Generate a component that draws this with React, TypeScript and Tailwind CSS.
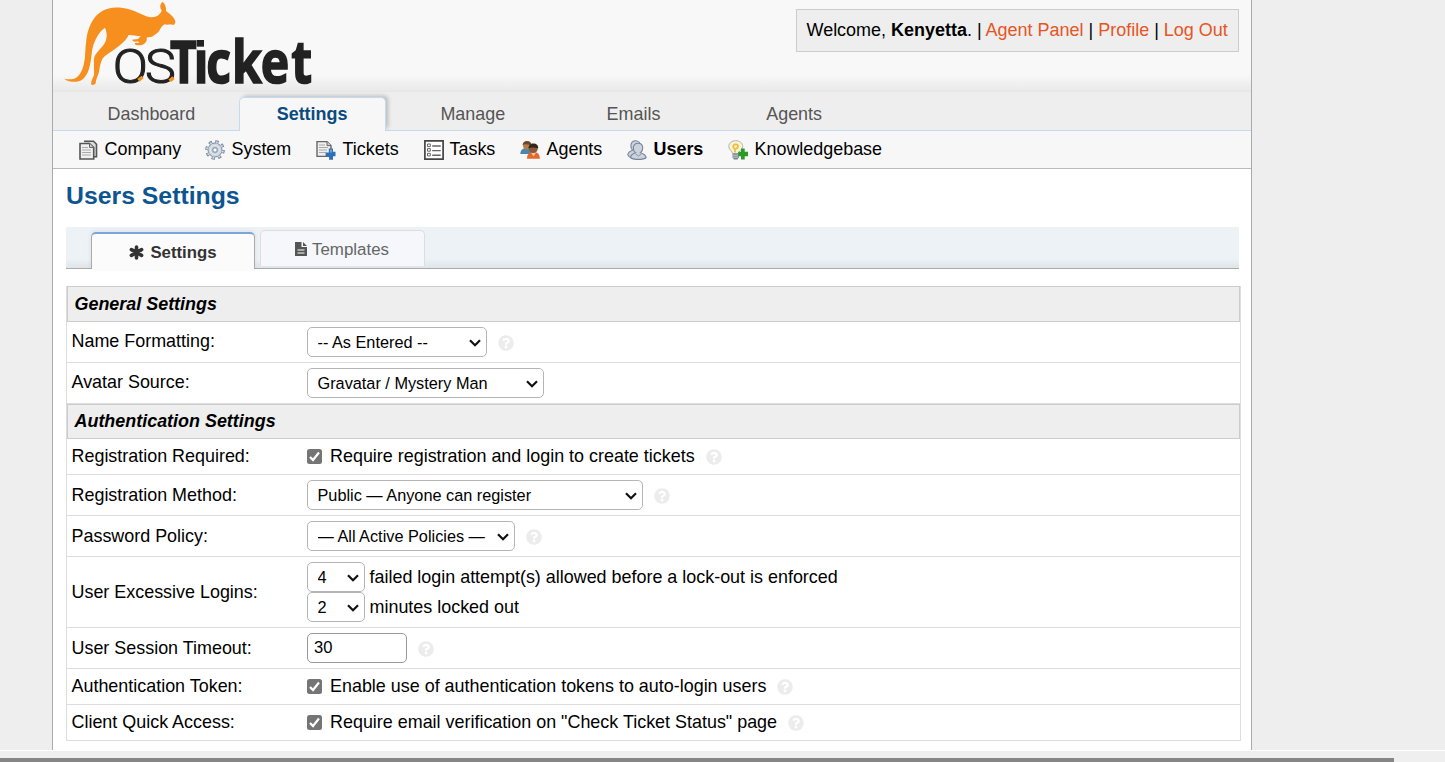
import React from "react";
import { FaQuestionCircle } from "react-icons/fa";

function Logo() {
  return (
    <svg className="block h-[91px] w-[270px] overflow-visible" viewBox="9 0 810 273" aria-label="osTicket">
      <path
        fill="#f78f1e"
        d="M338 5C346 13 349 22 348 33C358 40 371 51 374 59C378 65 375 73 370 75C361 72 352 76 344 73C338 75 332 84 328 92C324 99 316 103 312 106C308 112 298 111 290 113C292 121 288 127 282 132C276 137 262 137 256 134L254 129L268 128L264 124C256 127 248 124 246 119L264 117L272 108C256 108 244 104 236 105C228 122 212 134 196 146C176 160 162 168 157 177C151 188 149 204 147 216C144 228 137 238 137 250C133 256 127 256 123 253C123 243 128 236 132 226C133 206 131 186 132 176C134 162 150 149 162 133C170 120 174 104 165 83C149 93 135 117 128 143C123 167 124 188 115 212C108 231 96 243 80 245C67 246 52 244 42 236C50 237 60 239 69 237C84 235 95 217 101 195C107 172 105 145 109 120C112 95 120 68 140 46C160 26 187 22 213 23C243 25 266 39 289 49C300 53 316 53 325 46C330 41 335 36 335 31C329 23 329 12 338 5Z"
      />
      <g fill="#222" stroke="#222">
        <text
          transform="translate(0 249) scale(1.08 1)"
          fontFamily="Roboto"
          fontWeight="300"
          fontSize="144"
          strokeWidth="3"
          x="174 264"
        >
          OS
        </text>
        <text
          transform="translate(0 249) scale(0.82 1)"
          fontFamily="'Open Sans'"
          fontWeight="700"
          fontSize="176"
          strokeWidth="5"
          x="439 526 572 666 771 883"
        >
          Ticket
        </text>
      </g>
      <path fill="#f8f8f8" d="M439 98H468V147H439Z" />
      <path fill="#222" d="M440 120H462V140H440Z" />
      <path fill="#f78f1e" d="M262 237L275 227L281 234L269 245ZM355 239L367 229L374 237L364 246Z" />
    </svg>
  );
}

const CompanyIcon = () => (
  <svg viewBox="0 0 20 20" className="h-5 w-5">
    <path d="M5 1.300h9.500l3 3v12.500h-3" fill="#ddd" stroke="#555" strokeWidth="1.600" />
    <path d="M1 3.500h9.500l4.200 4v11.500H1z" fill="#f1f1f1" stroke="#555" strokeWidth="1.600" />
    <path d="M10.500 3.500v4h4" fill="#ccc" stroke="#666" />
    <path d="M3 7.500h6M3 10h9M3 12.500h9M3 15h9" stroke="#aaa" strokeWidth="1.200" />
  </svg>
);

const SystemIcon = () => (
  <svg viewBox="0 0 20 20" className="h-5 w-5">
    <circle cx="10" cy="10" r="8.200" fill="none" stroke="#74849a" strokeWidth="3.200" strokeDasharray="3.300 3.140" />
    <circle cx="10" cy="10" r="7" fill="#cfd8e2" stroke="#7f8da0" strokeWidth="1" />
    <circle
      cx="10"
      cy="10"
      r="7.800"
      fill="none"
      stroke="#cfd8e2"
      strokeWidth="2.200"
      strokeDasharray="1.800 4.326"
      strokeDashoffset="-.670"
    />
    <circle cx="10" cy="10" r="4.200" fill="#b4bfcc" stroke="#edf1f5" />
    <circle cx="10" cy="10" r="2.200" fill="#fff" stroke="#8290a0" />
  </svg>
);

const TicketsIcon = () => (
  <svg viewBox="0 0 20 20" className="h-5 w-5">
    <path d="M1 1.600h10l4 4v10.800H1z" fill="#eee" stroke="#666" strokeWidth="1.400" />
    <path d="M11 1.600v4h4" fill="#ccc" stroke="#666" />
    <path d="M3 5h6M3 7.500h9M3 10h8M3 12.500h7" stroke="#aaa" strokeWidth="1.200" />
    <path d="M12.800 8.500H17v3.200h2.500v4.600H17v3.400h-3.900v-3.200H9.600v-4h3.200z" fill="#2d70b8" />
    <path d="M14 9.500h2v3h-2z" fill="#72a4d8" />
  </svg>
);

const TasksIcon = () => (
  <svg viewBox="0 0 20 20" className="h-5 w-5">
    <path d="M.900.900h18.200v18.200H.900z" fill="#fff" stroke="#444" strokeWidth="1.700" />
    <path d="M3.500 4h2.800v2.600H3.500zM3.500 8.600h2.800v2.600H3.500zM3.500 13.300h2.800v2.600H3.500z" fill="#fff" stroke="#666" />
    <path d="M8.200 6h8.500M8.200 10.600h8.500M8.200 15.300h8.500" stroke="#666" strokeWidth="1.400" />
  </svg>
);

const AgentsIcon = () => (
  <svg viewBox="0 0 20 20" className="h-5 w-5">
    <path d="M.300 14C.300 10 3 8 7 8s5 3 5 6z" fill="#4a86ad" />
    <circle cx="7" cy="5.500" r="4" fill="#b97d4c" />
    <path d="M2.600 5.500C2.500 2.500 4.500 1 7 1s4.500 1.500 4.300 3.700C8 5.500 5 3 2.600 5.500z" fill="#6b4828" />
    <path d="M7 18.800C7 14.500 9 12 13.500 12s6.300 2.500 6.300 6.800z" fill="#e4672c" />
    <path d="M11 12.500l2.500 4 2.700-4z" fill="#f3c19c" />
    <circle cx="13.300" cy="8.500" r="4.500" fill="#8a5a38" />
    <path d="M8.600 8.500C8.500 5.300 10.500 3.500 13.400 3.500s5 1.900 4.800 4.700C15 8 11.500 6.500 8.600 8.500z" fill="#33251b" />
  </svg>
);

const UsersIcon = () => (
  <svg viewBox="0 0 20 20" className="h-5 w-5">
    <g fill="#cbd2dc" stroke="#76859b" strokeWidth="1.100">
      <path d="M.800 14.800c.400-3 2-3.700 4.700-4.600C4 8.700 3.700 7 3.900 5.200 4.200 2.500 6 .800 8.600.800s4.800 2 4.800 4.900L12 17H2.500z" />
      <path d="M3.500 17.500c.500-3 2.200-3.800 5-4.700-1.700-1.300-2.200-3-2.200-4.800C6.300 5 8.200 3.300 11 3.300S15.700 5.100 15.700 8c0 1.900-.700 3.600-2.200 4.800 3 .900 5 1.700 5.700 4.700-1.500 1.500-4.500 1.900-8 1.900s-6.200-.400-7.700-1.900z" />
    </g>
    <path d="M8.500 14l3 2 2.800-2" fill="none" stroke="#8c99ab" />
  </svg>
);

const KnowledgeIcon = () => (
  <svg viewBox="0 0 20 20" className="h-5 w-5">
    <path
      d="M4.500 13.500C4.500 11 .800 10 .800 6.500.800 3 3.800.700 7.700.700s7 2.300 7 5.800-4.200 4.500-4.200 7z"
      fill="#fbf3cf"
      stroke="#a9b4bf"
    />
    <path
      d="M7 12.500V9C5 7.800 4.800 6.500 5.700 5.200s3.800-1 4.300.500-.700 2.500-2 3.300"
      fill="none"
      stroke="#e9bd43"
      strokeWidth="1.700"
    />
    <path d="M4.500 13.500h6.300v4L9.500 19.500H6L4.500 17.500z" fill="#75818f" />
    <path d="M4.500 15.200h5.500M4.500 17.200h5.500" stroke="#c9d0d8" />
    <path d="M13 8.500h3.700v3.200H20v4.500h-3.300v3.300H13v-3.300h-2.800v-4.500H13z" fill="#2b9a26" />
  </svg>
);

const mainTabs = ["Dashboard", "Settings", "Manage", "Emails", "Agents"];

const subTabs = [
  { label: "Company", icon: <CompanyIcon />, width: "w-[126px]", gap: "ml-[5.500px]" },
  { label: "System", icon: <SystemIcon />, width: "w-[111px]", gap: "ml-[6.500px]" },
  { label: "Tickets", icon: <TicketsIcon />, width: "w-[108px]", gap: "ml-[6.500px]" },
  { label: "Tasks", icon: <TasksIcon />, width: "w-[96px]", gap: "ml-[5.500px]" },
  { label: "Agents", icon: <AgentsIcon />, width: "w-[107px]", gap: "ml-[6.500px]" },
  { label: "Users", icon: <UsersIcon />, width: "w-[101px]", gap: "ml-[6.500px] font-bold" },
  { label: "Knowledgebase", icon: <KnowledgeIcon />, width: "w-[170px]", gap: "ml-[6.500px]" },
];

function Help() {
  return <FaQuestionCircle className="mt-px ml-[11px] h-4 w-4 text-[#ececec]" />;
}

function Select({ value, width }: { value: string; width: string }) {
  return (
    <div className={`grid h-[30px] items-center ${width}`}>
      <select className="col-start-1 row-start-1 h-[30px] w-full appearance-none rounded-[5px] border border-[#b5b5b5] bg-white pl-[9.500px] text-[16.300px] text-black">
        <option>{value}</option>
      </select>
      <svg
        viewBox="0 0 12 8"
        className="pointer-events-none col-start-1 row-start-1 mt-px mr-[6px] h-2 w-3 justify-self-end"
        fill="none"
        stroke="#111"
        strokeWidth="2.200"
      >
        <path d="M1 1.300L6 6.300L11 1.300" />
      </svg>
    </div>
  );
}

function Check({ label }: { label: string }) {
  return (
    <label className="flex items-center">
      <span className="flex h-[15px] w-[15px] items-center justify-center rounded-[2.500px] bg-[#757575]">
        <svg viewBox="0 0 15 15" className="h-[15px] w-[15px]" fill="none" stroke="#fff" strokeWidth="2.200">
          <path d="M3 8L6 11L12 3.500" />
        </svg>
      </span>
      <span className="-mt-[2px] ml-2 whitespace-nowrap">{label}</span>
    </label>
  );
}

type RowProps = { label: string; height: string; nudge?: string; children: React.ReactNode };

function Row({ label, height, nudge = "-mt-[2px]", children }: RowProps) {
  return (
    <div className={`flex items-center border-b border-[#ddd] ${height}`}>
      <div className={`w-[240px] shrink-0 pl-[4.500px] ${nudge}`}>{label}</div>
      {children}
    </div>
  );
}

function Section({ title, height }: { title: string; height: string }) {
  return (
    <div className={`flex items-center border border-[#ccc] bg-[#eee] pl-[6.500px] font-bold italic ${height}`}>
      {title}
    </div>
  );
}

export default function App() {
  return (
    <div className="flex h-[762px] w-[1445px] flex-col overflow-hidden bg-[#eee] font-['Liberation_Sans',Arial,sans-serif] text-[17.930px] leading-[22px] text-black">
      <div className="ml-[52px] h-[750px] w-[1200px] shrink-0 border-x border-[#aaa] bg-white">
        <header className="flex h-[92px] justify-between border-b border-[#e6e6e6] bg-[linear-gradient(#f8f8f8_0,#f8f8f8_75px,#e9e9e9_91px)] pr-3">
          <Logo />
          <div className="mt-[9px] flex h-[43px] w-[443px] items-center border border-[#ccc] bg-[#eee] pb-[2px] pl-[9.500px] text-[17.980px] whitespace-pre">
            <span>
              Welcome, <b>Kenyetta</b>. | <a className="text-[#e65524]">Agent Panel</a> |{" "}
              <a className="text-[#e65524]">Profile</a> | <a className="text-[#e65524]">Log Out</a>
            </span>
          </div>
        </header>

        <nav className="flex h-[39px] items-end gap-[13.700px] border-b border-[#c5d9f1] bg-[#eee] pl-[24.900px]">
          {mainTabs.map((tab) =>
            tab === "Settings" ? (
              <a
                key={tab}
                className="-mb-px flex h-[34px] w-[147px] items-center justify-center rounded-t-[5px] border border-b-0 border-[#c5d9f1] bg-[#f7f7f7] pb-[2px] font-bold text-[#0a4a80] shadow-[3px_-2px_4px_-1px_rgba(0,0,0,0.22)] [clip-path:inset(-6px_-8px_0_-6px)]"
              >
                {tab}
              </a>
            ) : (
              <a key={tab} className="flex h-[33px] w-[147px] items-center justify-center text-[#555]">
                {tab}
              </a>
            ),
          )}
        </nav>

        <nav className="flex h-[38px] items-center border-b border-[#bbb] bg-[#f7f7f7] pl-[26px]">
          {subTabs.map((tab) => (
            <a key={tab.label} className={`flex shrink-0 items-center ${tab.width}`}>
              <span className="mt-px">{tab.icon}</span>
              <span className={`-mt-px ${tab.gap}`}>{tab.label}</span>
            </a>
          ))}
        </nav>

        <main className="pl-[13px]">
          <h2 className="h-[58px] pt-[12px] text-[24.800px] leading-[30px] font-bold text-[#0d5591]">Users Settings</h2>

          <div className="flex h-[42px] w-[1173px] items-end gap-[5px] border-b border-[#aaa] bg-[linear-gradient(#edf2f7_0,#edf2f7_32px,#dfe4e9_41px)] pl-[25px]">
            <a className="-mb-px flex h-[37px] w-[164px] items-center justify-center rounded-t-[5px] border border-t-2 border-b-0 border-[#aaa] border-t-[#7aa6dc] bg-[#fbfbfb] pt-[3px] text-[16.800px] font-bold text-[#333] shadow-[0_-1px_5px_rgba(0,0,0,0.08)]">
              <svg
                viewBox="0 0 15 15"
                className="-mt-px mr-[6px] h-[15px] w-[15px]"
                stroke="#333"
                strokeWidth="3.600"
                strokeLinecap="round"
              >
                <path d="M7.500 2v11M2.400 4.700l10.200 5.600M12.600 4.700L2.400 10.300" />
              </svg>
              Settings
            </a>
            <a className="mb-[2px] flex h-[36px] w-[165px] items-center justify-center rounded-t-[5px] border border-b-0 border-[#ddd] bg-[#f5f7fb] pt-[2px] pr-px text-[16.900px] text-[#666]">
              <svg viewBox="0 0 12 14" className="-mt-[2px] mr-[5px] h-[14px] w-3">
                <path d="M0 0h6.500v5H12v9H0zM8 0l4 4H8z" fill="#555" />
                <path d="M2.500 8h7M2.500 11h7" stroke="#fff" strokeWidth="1.200" />
              </svg>
              Templates
            </a>
          </div>

          <section className="mt-[17px] w-[1175px] border-x border-[#ddd]">
            <Section title="General Settings" height="h-[36px]" />
            <Row label="Name Formatting:" height="h-[41px]">
              <Select value="-- As Entered --" width="w-[180px]" />
              <Help />
            </Row>
            <Row label="Avatar Source:" height="h-[41px]">
              <Select value="Gravatar / Mystery Man" width="w-[237px]" />
            </Row>
            <Section title="Authentication Settings" height="h-[35px] pb-px" />
            <Row label="Registration Required:" height="h-[36px]">
              <Check label="Require registration and login to create tickets" />
              <Help />
            </Row>
            <Row label="Registration Method:" height="h-[41px]" nudge="mt-0">
              <Select value="Public — Anyone can register" width="w-[336px]" />
              <Help />
            </Row>
            <Row label="Password Policy:" height="h-[41px]" nudge="mt-0">
              <Select value="— All Active Policies —" width="w-[208px]" />
              <Help />
            </Row>
            <Row label="User Excessive Logins:" height="h-[71px]" nudge="mt-0">
              <div>
                <div className="flex items-center gap-[4.500px]">
                  <Select value="4" width="w-[58px]" />
                  <span>failed login attempt(s) allowed before a lock-out is enforced</span>
                </div>
                <div className="flex items-center gap-[4.500px]">
                  <Select value="2" width="w-[58px]" />
                  <span>minutes locked out</span>
                </div>
              </div>
            </Row>
            <Row label="User Session Timeout:" height="h-[41px]" nudge="mt-0">
              <input
                className="h-[30px] w-[100px] rounded-[5px] border border-[#999] bg-white pl-[6px] text-[16.600px] text-black"
                defaultValue="30"
              />
              <Help />
            </Row>
            <Row label="Authentication Token:" height="h-[36px]">
              <Check label="Enable use of authentication tokens to auto-login users" />
              <Help />
            </Row>
            <Row label="Client Quick Access:" height="h-[36px]">
              <Check label={'Require email verification on "Check Ticket Status" page'} />
              <Help />
            </Row>
          </section>
        </main>
      </div>
      <div className="flex h-3 shrink-0 flex-col justify-end border-t border-white bg-[#efefef]">
        <div className="h-1 w-[1394px] bg-[#868686]" />
      </div>
    </div>
  );
}
